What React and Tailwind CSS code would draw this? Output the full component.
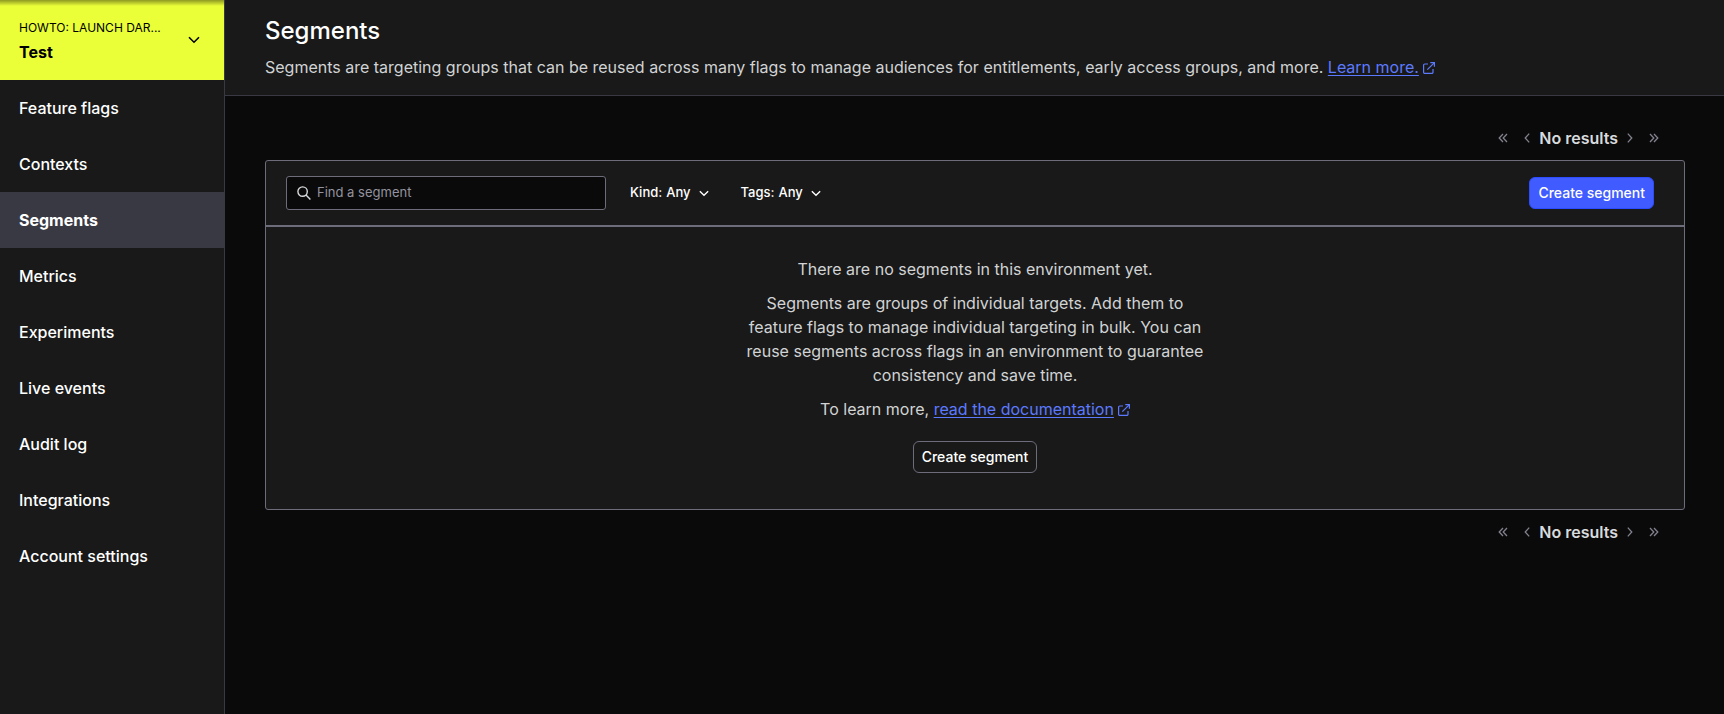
const NAV_ITEMS = [
  "Feature flags",
  "Contexts",
  "Segments",
  "Metrics",
  "Experiments",
  "Live events",
  "Audit log",
  "Integrations",
  "Account settings",
];

function Chevron({ className }) {
  return (
    <svg viewBox="0 0 12 8" className={className} fill="none" stroke="currentColor" strokeWidth="1.6" aria-hidden="true">
      <path d="M1 1.2 6 6.2 11 1.2" />
    </svg>
  );
}

function ExternalIcon() {
  return (
    <svg viewBox="0 0 12 12" className="ml-1 inline-block size-3 align-[-1px]" fill="none" stroke="currentColor" strokeWidth="1.2" aria-hidden="true">
      <path d="M5 2H1.8A1.2 1.2 0 0 0 .6 3.2v7a1.2 1.2 0 0 0 1.2 1.2h7A1.2 1.2 0 0 0 10 10.200V7" />
      <path d="M4.300 7.700 11.200.8" />
      <path d="M7.300.6h4.100v4.100" />
    </svg>
  );
}

function DocLink({ children }) {
  return (
    <a href="#docs" className="whitespace-nowrap text-[#5c7aff]">
      <span className="underline underline-offset-2">{children}</span>
      <ExternalIcon />
    </a>
  );
}

function PagerButton({ label, path, wide }) {
  return (
    <button type="button" aria-label={label} className="text-[#83838f]">
      <svg viewBox={wide ? "0 0 10 10" : "0 0 6 10"} className={wide ? "h-2.5 w-2.5" : "h-2.5 w-1.5"} fill="none" stroke="currentColor" strokeWidth="1.3" aria-hidden="true">
        <path d={path} />
      </svg>
    </button>
  );
}

function Pager() {
  return (
    <nav aria-label="Pagination" className="flex h-6 items-center justify-end pr-[26px]">
      <div className="flex items-center gap-4">
        <PagerButton wide label="First page" path="M5 1 1.2 5 5 9M9 1 5.2 5 9 9" />
        <div className="flex items-center gap-[9px]">
          <PagerButton label="Previous page" path="M5.2.6 1.2 5l4 4.4" />
          <span className="font-semibold text-[#d8dadd]">No results</span>
          <PagerButton label="Next page" path="M.8.6l4 4.4-4 4.4" />
        </div>
        <PagerButton wide label="Last page" path="M1 1l3.800 4L1 9M5 1l3.800 4L5 9" />
      </div>
    </nav>
  );
}

function Filter({ label, id }) {
  return (
    <div className="flex items-center text-[13px] font-medium text-white">
      <label htmlFor={id} className="mr-1">{label}</label>
      <select id={id} className="appearance-none bg-transparent field-sizing-content">
        <option>Any</option>
      </select>
      <Chevron className="pointer-events-none ml-2 h-[7px] w-2.5" />
    </div>
  );
}

export default function App() {
  return (
    <div className="flex min-h-screen bg-[#0a0a0a] font-['Inter',sans-serif] text-base text-[#d1d3d4]">
      <aside className="w-[225px] shrink-0 border-r border-[#393943] bg-[#191919]">
        <button
          type="button"
          className="flex h-20 w-full items-center justify-between bg-[#ebff38] bg-linear-to-b from-black/40 to-transparent to-[6px] pt-1 pr-6 pl-[19px] text-left text-black"
        >
          <span>
            <span className="block text-xs leading-5">HOWTO: LAUNCH DAR...</span>
            <span className="block text-base leading-7 font-bold">Test</span>
          </span>
          <Chevron className="mb-1 h-2 w-3" />
        </button>
        <nav aria-label="Main">
          {NAV_ITEMS.map((item) => (
            <a
              key={item}
              href="#nav"
              aria-current={item === "Segments" ? "page" : undefined}
              className="flex h-14 items-center pl-[19px] font-medium text-white aria-[current=page]:bg-[#393943] aria-[current=page]:font-bold"
            >
              {item}
            </a>
          ))}
        </nav>
      </aside>

      <div className="min-w-0 flex-1">
        <header className="border-b border-[#393943] bg-[#191919] px-10 pt-[15px] pb-4">
          <h1 className="text-2xl leading-8 font-medium text-white">Segments</h1>
          <p className="mt-2 leading-6">
            Segments are targeting groups that can be reused across many flags to manage audiences for
            entitlements, early access groups, and more. <DocLink>Learn more.</DocLink>
          </p>
        </header>

        <main className="pt-[30px] pr-[39px] pl-10">
          <Pager />
          <section className="my-2.5 rounded-[3px] border border-[#6c6c7a] bg-[#191919]">
            <div className="flex items-center border-b-2 border-[#6c6c7a] py-[15px] pr-[30px] pl-5">
              <label className="flex h-[34px] w-80 items-center gap-1.5 rounded-[3px] border border-[#6c6c7a] bg-[#0a0a0a] pl-2.5">
                <svg viewBox="0 0 14 14" className="size-3.5 text-[#d8dadd]" fill="none" stroke="currentColor" strokeWidth="1.4" aria-hidden="true">
                  <circle cx="5.6" cy="5.6" r="4.7" />
                  <path d="M9 9l4.4 4.4" />
                </svg>
                <input
                  type="search"
                  aria-label="Find a segment"
                  placeholder="Find a segment"
                  className="min-w-0 flex-1 bg-transparent text-[13px] text-white outline-none placeholder:text-[#93939f]"
                />
              </label>
              <div className="ml-6 flex gap-8">
                <Filter id="kind" label="Kind:" />
                <Filter id="tags" label="Tags:" />
              </div>
              <button type="button" className="ml-auto h-8 rounded-md border border-[#2c4cff] bg-[#405bff] px-2 text-sm font-medium text-white">
                Create segment
              </button>
            </div>
            <div className="flex flex-col items-center gap-2.5 px-5 pt-[30px] pb-9 text-center leading-6">
              <p>There are no segments in this environment yet.</p>
              <p className="max-w-[460px]">
                Segments are groups of individual targets. Add them to feature flags to manage individual targeting
                in bulk. You can reuse segments across flags in an environment to guarantee consistency and save time.
              </p>
              <p>
                To learn more, <DocLink>read the documentation</DocLink>
              </p>
              <button type="button" className="mt-2.5 h-8 rounded-md border border-[#6c6c7a] px-2 text-sm font-medium text-white">
                Create segment
              </button>
            </div>
          </section>
          <Pager />
        </main>
      </div>
    </div>
  );
}
